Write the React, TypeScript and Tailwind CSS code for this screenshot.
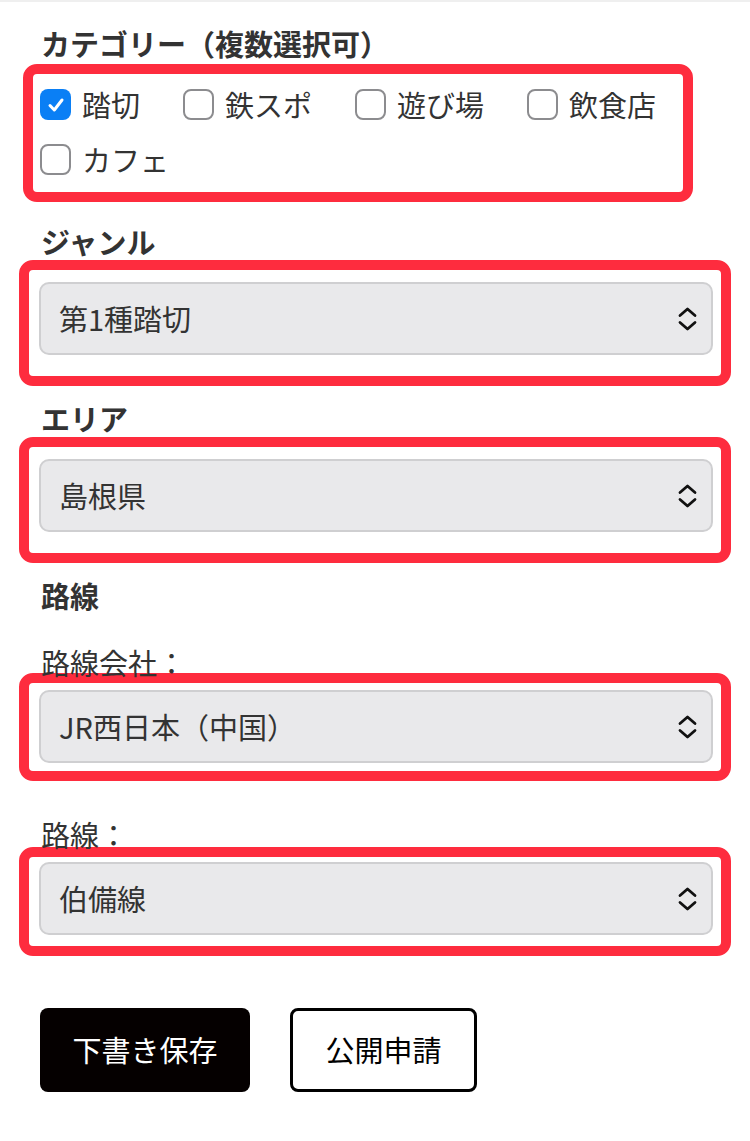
import { useState } from "react";

const categories = ["踏切", "鉄スポ", "遊び場", "飲食店", "カフェ"];

function Chevrons() {
  return (
    <svg
      className="pointer-events-none absolute right-[15px] top-1/2 -translate-y-1/2"
      width="21"
      height="27"
      viewBox="0 0 21 27"
      fill="none"
      stroke="#111"
      strokeWidth="2.8"
      strokeLinecap="round"
      strokeLinejoin="round"
    >
      <path d="M3 10 L10.5 3.5 L18 10" />
      <path d="M3 17 L10.5 23.5 L18 17" />
    </svg>
  );
}

function SelectBox({ value, options, boxClass }: { value: string; options: string[]; boxClass: string }) {
  const [current, setCurrent] = useState(value);
  return (
    <div className={`rounded-[14px] border-[10px] border-[#fe2c3e] pl-[10px] pr-[8px] ${boxClass}`}>
      <div className="relative">
        <select
          className="h-[73px] w-full appearance-none rounded-[10px] border-2 border-[#cfcfd1] bg-[#e9e9eb] pl-[18px] pr-12 text-[29px] text-[#333] outline-none"
          onChange={(event) => setCurrent(event.target.value)}
          value={current}
        >
          {options.map((option) => (
            <option key={option}>{option}</option>
          ))}
        </select>
        <Chevrons />
      </div>
    </div>
  );
}

export default function App() {
  const [checked, setChecked] = useState<string[]>(["踏切"]);

  function toggle(name: string) {
    setChecked((prev) => (prev.includes(name) ? prev.filter((c) => c !== name) : [...prev, name]));
  }

  return (
    <main
      className="min-h-screen border-t-2 border-[#efefef] bg-white text-[#333]"
      style={{ fontFamily: '"Noto Sans CJK JP", "Noto Sans", sans-serif' }}
    >
      <h2 className="ml-[41px] mt-[22px] text-[29px] font-bold leading-[38px]">カテゴリー（複数選択可）</h2>

      <div className="ml-[23px] mt-[2px] w-[670px] rounded-[14px] border-[10px] border-[#fe2c3e] pb-[5px] pl-[7px] pt-[3px]">
        <div className="flex flex-wrap gap-x-[43px]">
          {categories.map((name) => {
            const on = checked.includes(name);
            return (
              <label className="flex h-[55px] cursor-pointer items-center gap-[11px]" key={name}>
                <input checked={on} className="hidden" onChange={() => toggle(name)} type="checkbox" />
                {on ? (
                  <span className="flex h-[31px] w-[31px] items-center justify-center rounded-[8px] bg-[#0a7ff5]">
                    <svg width="20" height="20" viewBox="0 0 20 20" fill="none" stroke="white" strokeWidth="3" strokeLinecap="round" strokeLinejoin="round">
                      <path d="M4 10.5 L8.3 15 L16 5" />
                    </svg>
                  </span>
                ) : (
                  <span className="h-[31px] w-[31px] rounded-[8px] border-[2.5px] border-[#8c8c8f] bg-white" />
                )}
                <span className="text-[29px] leading-none">{name}</span>
              </label>
            );
          })}
        </div>
      </div>

      <div className="px-[19px]">
        <h3 className="ml-[22px] mt-[20px] text-[29px] font-bold leading-[38px]">ジャンル</h3>
        <SelectBox boxClass="pt-[12px] pb-[21px]" options={["第1種踏切", "第2種踏切", "第3種踏切", "第4種踏切"]} value="第1種踏切" />

        <h3 className="ml-[22px] mt-[13px] text-[29px] font-bold leading-[38px]">エリア</h3>
        <SelectBox boxClass="pt-[12px] pb-[21px]" options={["鳥取県", "島根県", "岡山県", "広島県", "山口県"]} value="島根県" />

        <h3 className="ml-[22px] mt-[13px] text-[29px] font-bold leading-[38px]">路線</h3>

        <p className="ml-[22px] mt-[29px] text-[29px] leading-[38px]">路線会社：</p>
        <SelectBox boxClass="-mt-[8px] pt-[7px] pb-[8px]" options={["JR西日本（中国）", "一畑電車"]} value="JR西日本（中国）" />

        <p className="ml-[22px] mt-[34px] text-[29px] leading-[38px]">路線：</p>
        <SelectBox boxClass="-mt-[6px] pt-[5px] pb-[11px]" options={["伯備線", "山陰本線", "木次線"]} value="伯備線" />
      </div>

      <div className="ml-[40px] mt-[52px] flex gap-[40px] pb-12">
        <button className="h-[84px] w-[210px] rounded-[8px] bg-[#050000] text-[29px] text-white" type="button">
          下書き保存
        </button>
        <button className="h-[84px] w-[187px] rounded-[8px] border-[3px] border-black bg-white text-[29px] text-black" type="button">
          公開申請
        </button>
      </div>
    </main>
  );
}
